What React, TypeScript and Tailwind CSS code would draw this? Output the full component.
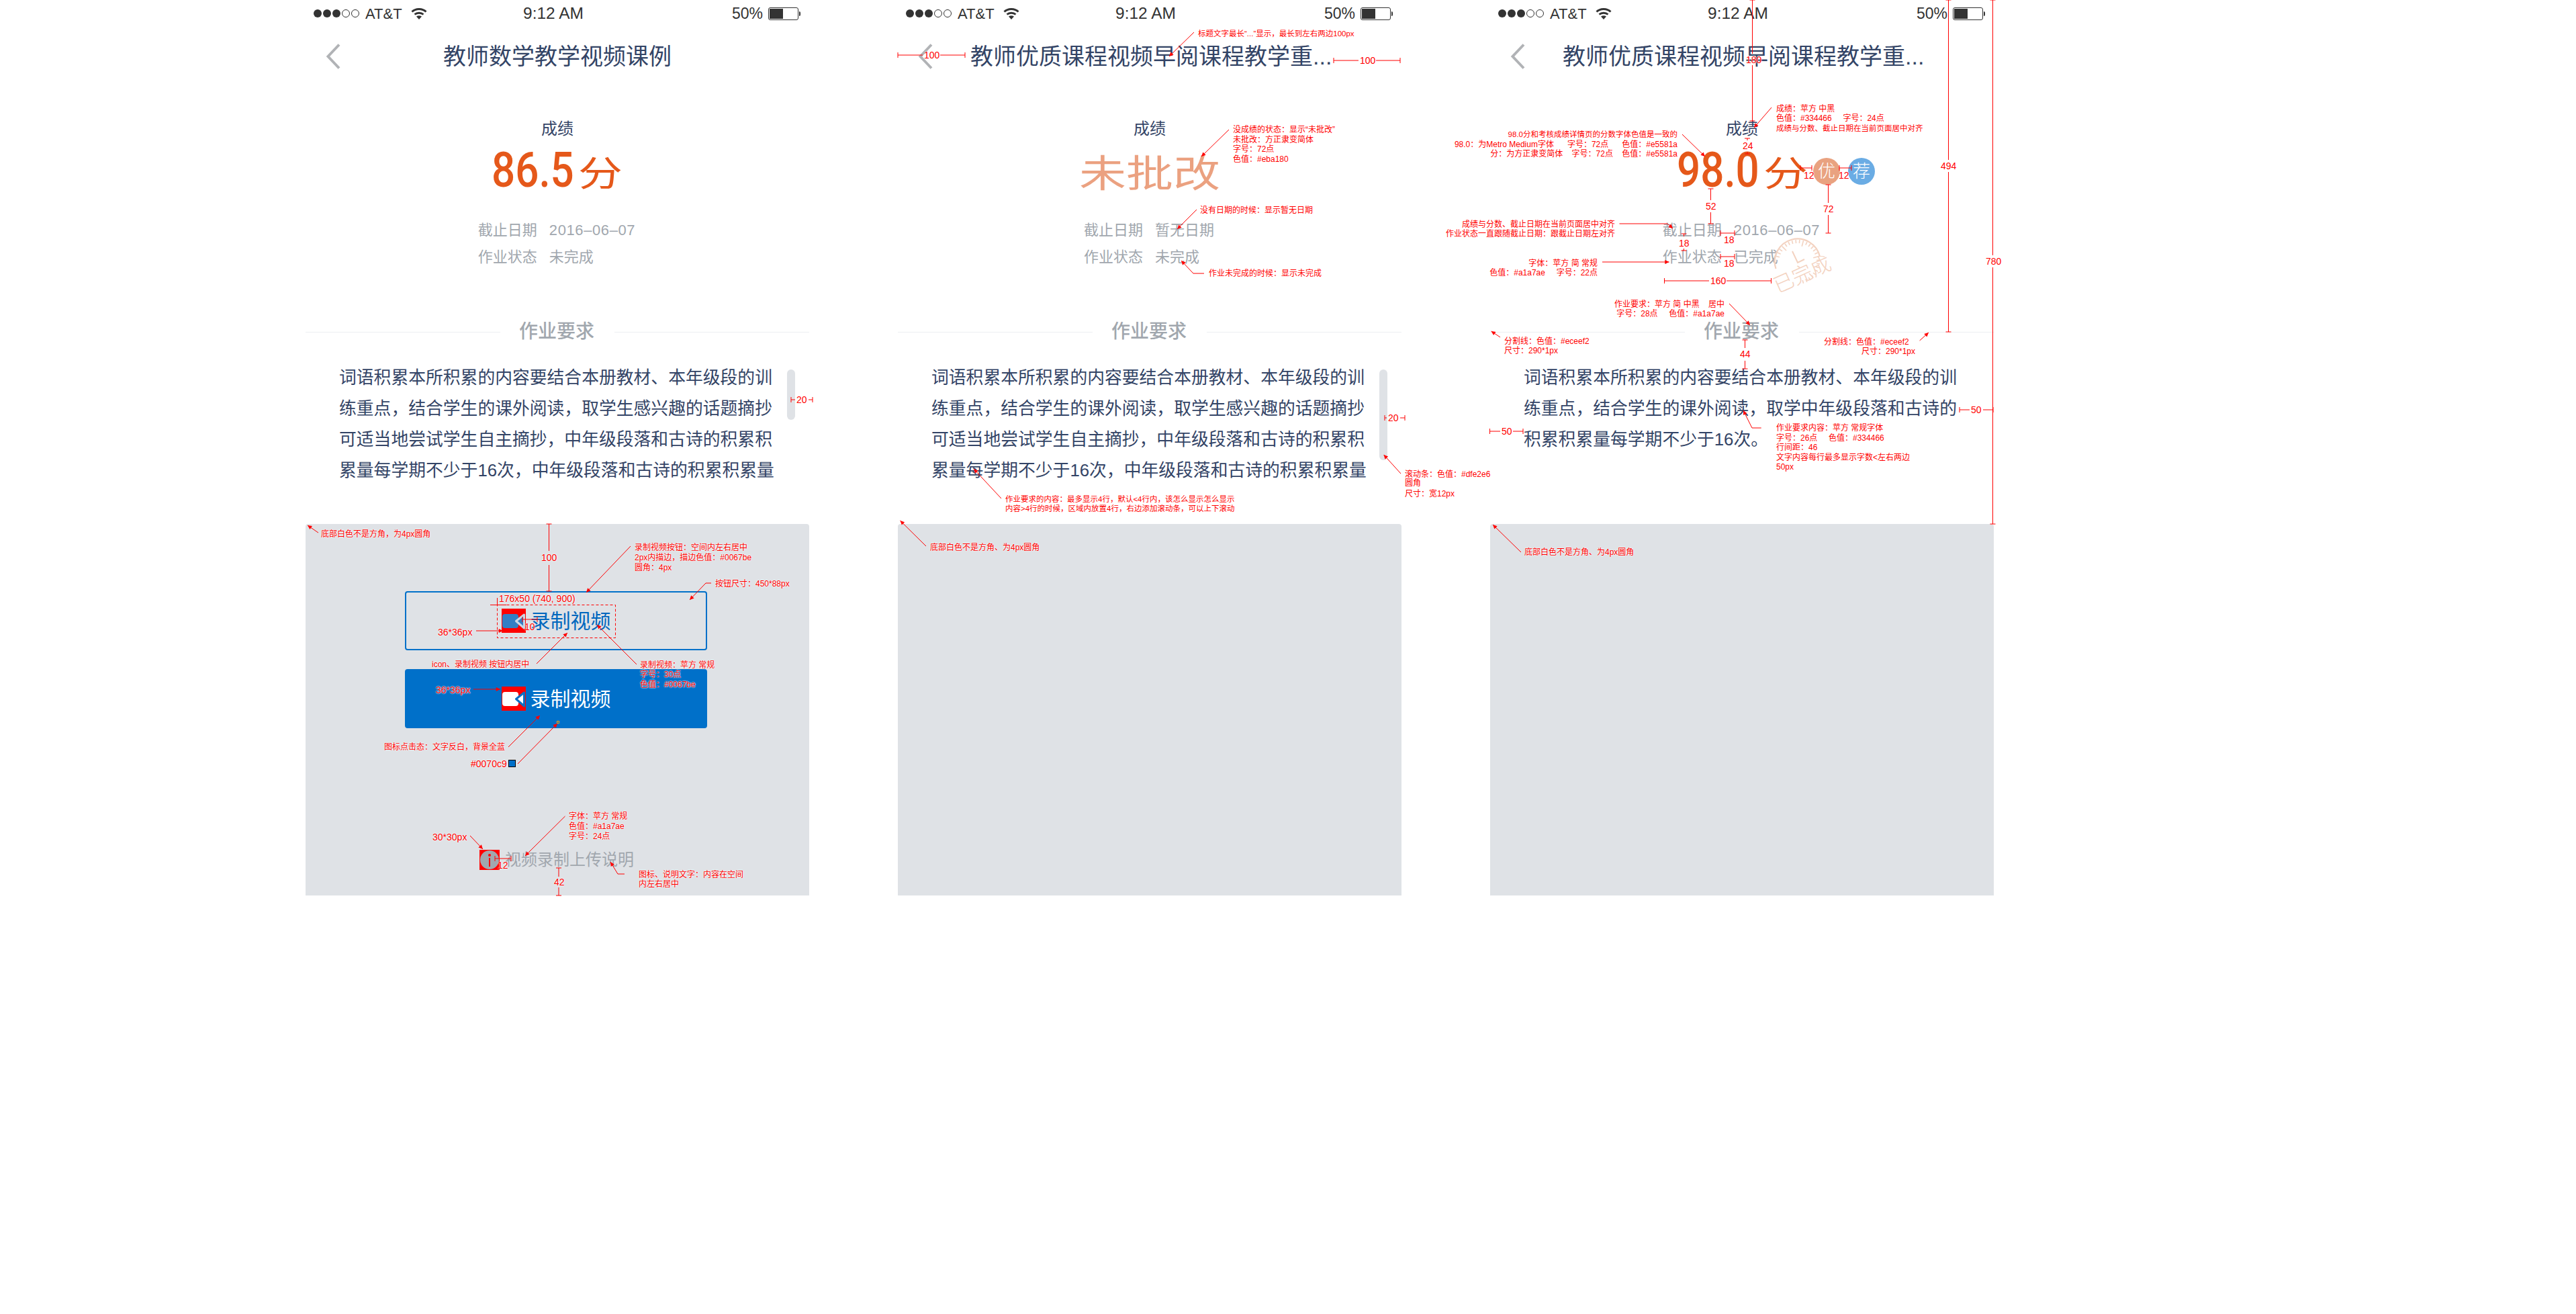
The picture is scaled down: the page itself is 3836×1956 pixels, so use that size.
import React from "react";

type Pts = number[];

// CJK strings in the picture use full-width comma and colon
const fw = (s: string) =>
  /[\u4e00-\u9fff]/.test(s) ? s.replace(/,/g, "\uFF0C").replace(/:/g, "\uFF1A") : s;

const arrows: Pts[] = [
  [474, 793, 458, 782],
  [939, 813, 873, 882],
  [1059, 868, 1051, 868, 1027, 893],
  [799, 988, 845, 942],
  [948, 989, 889, 930],
  [757, 1112, 804, 1065],
  [771, 1137, 830, 1077],
  [709, 939, 749, 939],
  [705, 1026, 745, 1026],
  [700, 1244, 719, 1264],
  [841.5, 1215, 782, 1274],
  [930, 1301, 920, 1301, 909, 1283],
  [1778, 48, 1741, 84],
  [1830, 193, 1789, 233],
  [1782, 312, 1753, 341],
  [1793, 407, 1777, 407, 1759, 388],
  [2086, 705, 2060.6, 677],
  [1491, 742, 1450, 698],
  [1379, 813, 1340.5, 775],
  [2638, 160, 2612, 190],
  [2505, 200, 2539, 233],
  [2411.5, 333, 2483, 333, 2491, 340],
  [2386, 390, 2485.6, 390],
  [2575, 452, 2606, 484],
  [2234, 502, 2220.6, 493],
  [2858.6, 507, 2872, 495],
  [2622.7, 637, 2609, 637, 2596, 611],
  [2265, 822, 2223, 781],
];

const dims: Pts[] = [
  [817.5, 780, 817.5, 880, 820, 841],
  [778, 922, 800, 922],
  [737, 1278, 761, 1278],
  [832, 1292, 832, 1333, 1305, 1321],
  [1178, 595, 1210, 595, 1184, 1204],
  [1337, 82, 1437, 82, 1374, 1400],
  [1986, 90, 2085, 90, 2023, 2049],
  [2062, 622, 2092, 622, 2065, 2085],
  [2609.5, 0, 2609.5, 180, 80, 97],
  [2901.5, 0, 2901.5, 494, 238, 256],
  [2967.5, 0, 2967.5, 780, 380, 398],
  [2602, 206, 2602, 229, 209, 226],
  [2547.5, 281, 2547.5, 333, 298, 316],
  [2722.5, 275, 2722.5, 347, 302, 320],
  [2507.5, 348, 2507.5, 373, 352, 370],
  [2681, 250, 2698, 250],
  [2739, 250, 2757, 250],
  [2562, 347, 2583, 347],
  [2562, 382, 2583, 382],
  [2478.5, 418, 2637.5, 418, 2545, 2571],
  [2598.5, 506, 2598.5, 549, 518, 537],
  [2918, 610, 2968, 610, 2933, 2953],
  [2218.5, 642, 2268, 642, 2234, 2253],
];

type Label = [number, number, string, number?, boolean?];

const labels: Label[] = [
  [478, 795, "底部白色不是方角,为4px圆角"],
  [806, 830, "100", 14],
  [945, 815, "录制视频按钮:空间内左右居中"],
  [945, 830, "2px内描边,描边色值:#0067be"],
  [945, 845, "圆角:4px"],
  [1065, 869, "按钮尺寸:450*88px"],
  [743, 891, "176x50 (740, 900)", 14],
  [652, 941, "36*36px", 14],
  [781, 933, "10", 14],
  [643, 989, "icon、录制视频 按钮内居中"],
  [953, 990, "录制视频:苹方 常规"],
  [953, 1004, "字号:30点"],
  [953, 1019, "色值:#0067be"],
  [649, 1027, "36*36px", 14],
  [572, 1112, "图标点击态:文字反白,背景全蓝"],
  [701, 1137, "#0070c9", 14],
  [644, 1246, "30*30px", 14],
  [847, 1215, "字体:苹方 常规"],
  [847, 1230, "色值:#a1a7ae"],
  [847, 1245, "字号:24点"],
  [741, 1288, "12", 14],
  [825, 1313, "42", 14],
  [951, 1302, "图标、说明文字:内容在空间"],
  [951, 1316, "内左右居中"],
  [1186, 595, "20", 14],

  [1784, 50, "标题文字最长“...”显示,最长到左右两边100px", 11.5],
  [1376, 82, "100", 14],
  [2025, 90, "100", 14],
  [1836, 193, "没成绩的状态:显示“未批改”"],
  [1836, 208, "未批改:方正隶变简体"],
  [1836, 222, "字号:72点"],
  [1836, 237, "色值:#eba180"],
  [1787, 313, "没有日期的时候:显示暂无日期"],
  [1800, 407, "作业未完成的时候:显示未完成"],
  [2067, 622, "20", 14],
  [2092, 706, "滚动条:色值:#dfe2e6"],
  [2092, 719, "圆角"],
  [2092, 735, "尺寸:宽12px"],
  [1497, 743, "作业要求的内容:最多显示4行,默认<4行内,该怎么显示怎么显示", 11.5],
  [1497, 757, "内容>4行的时候,区域内放置4行,右边添加滚动条,可以上下滚动", 11.5],
  [1385, 815, "底部白色不是方角、为4px圆角"],

  [2600, 89, "180", 14],
  [2890, 247, "494", 14],
  [2957, 389, "780", 14],
  [2645, 162, "成绩:苹方 中黑"],
  [2645, 176, "色值:#334466     字号:24点"],
  [2645, 191, "成绩与分数、截止日期在当前页面居中对齐", 11.5],
  [2498, 200, "98.0分和考核成绩详情页的分数字体色值是一致的", 11.5, true],
  [2498, 215, "98.0:为Metro Medium字体      字号:72点      色值:#e5581a", 12, true],
  [2498, 229, "分:为方正隶变简体    字号:72点    色值:#e5581a", 12, true],
  [2595, 217, "24", 14],
  [2540, 307, "52", 14],
  [2715, 311, "72", 14],
  [2686, 261, "12", 14],
  [2738, 261, "12", 14],
  [2405, 334, "成绩与分数、截止日期在当前页面居中对齐", 12, true],
  [2405, 348, "作业状态一直跟随截止日期:跟截止日期左对齐", 12, true],
  [2500, 362, "18", 14],
  [2567, 357, "18", 14],
  [2567, 392, "18", 14],
  [2379, 392, "字体:苹方 简 常规", 12, true],
  [2379, 406, "色值:#a1a7ae     字号:22点", 12, true],
  [2547, 418, "160", 14],
  [2568, 453, "作业要求:苹方 简 中黑    居中", 12, true],
  [2568, 467, "字号:28点     色值:#a1a7ae", 12, true],
  [2240, 508, "分割线:色值:#eceef2"],
  [2240, 522, "尺寸:290*1px"],
  [2716, 509, "分割线:色值:#eceef2"],
  [2852, 523, "尺寸:290*1px", 12, true],
  [2591, 527, "44", 14],
  [2935, 610, "50", 14],
  [2236, 642, "50", 14],
  [2645, 637, "作业要求内容:苹方 常规字体"],
  [2645, 652, "字号:26点     色值:#334466"],
  [2645, 666, "行间距:46"],
  [2645, 681, "文字内容每行最多显示字数<左右两边"],
  [2645, 695, "50px"],
  [2270, 822, "底部白色不是方角、为4px圆角"],
];

function Arrow({ p }: { p: Pts }) {
  const n = p.length;
  const [x1, y1, x2, y2] = [p[n - 4], p[n - 3], p[n - 2], p[n - 1]];
  const a = Math.atan2(y2 - y1, x2 - x1);
  const s = 7;
  const w = 0.45;
  const h = [
    x2,
    y2,
    x2 - s * Math.cos(a - w),
    y2 - s * Math.sin(a - w),
    x2 - s * Math.cos(a + w),
    y2 - s * Math.sin(a + w),
  ].join(" ");
  return (
    <g>
      <polyline points={p.join(" ")} fill="none" stroke="#ff0000" strokeWidth="1" />
      <polygon points={h} fill="#ff0000" />
    </g>
  );
}

function Dim({ d }: { d: Pts }) {
  const [x1, y1, x2, y2, g1, g2] = d;
  const vertical = x1 === x2;
  const t = 4;
  const segs: Pts[] = [];
  if (g1 !== undefined && g2 !== undefined) {
    if (vertical) {
      segs.push([x1, y1, x1, g1], [x1, g2, x1, y2]);
    } else {
      segs.push([x1, y1, g1, y1], [g2, y1, x2, y1]);
    }
  } else {
    segs.push([x1, y1, x2, y2]);
  }
  return (
    <g stroke="#ff0000" strokeWidth="1">
      {segs.map((s, i) => (
        <line key={i} x1={s[0]} y1={s[1]} x2={s[2]} y2={s[3]} />
      ))}
      {vertical ? (
        <>
          <line x1={x1 - t} y1={y1} x2={x1 + t} y2={y1} />
          <line x1={x1 - t} y1={y2} x2={x1 + t} y2={y2} />
        </>
      ) : (
        <>
          <line x1={x1} y1={y1 - t} x2={x1} y2={y1 + t} />
          <line x1={x2} y1={y1 - t} x2={x2} y2={y1 + t} />
        </>
      )}
    </g>
  );
}

function AnnotationLayer() {
  return (
    <div className="absolute inset-0 pointer-events-none">
      <svg width="3836" height="1956" className="absolute left-0 top-0">
        {arrows.map((p, i) => (
          <Arrow key={i} p={p} />
        ))}
        {dims.map((d, i) => (
          <Dim key={i} d={d} />
        ))}
        <rect x="740.5" y="900.5" width="176" height="49" fill="none" stroke="#ff0000" strokeDasharray="4 3" />
        <line x1="730" y1="900.5" x2="754" y2="900.5" stroke="#ff0000" />
        <line x1="740.5" y1="890" x2="740.5" y2="900" stroke="#ff0000" />
        <rect x="829.5" y="1073.5" width="3" height="3" fill="#0070c9" stroke="#f59e0b" />
      </svg>
      {labels.map(([x, y, text, size = 12, right], i) => (
        <div
          key={i}
          className={`absolute whitespace-pre leading-[14px] text-[#ff0000] [text-shadow:0_0_2px_#fff,0_0_2px_#fff] ${
            right ? "-translate-x-full" : ""
          }`}
          style={{ left: x, top: y - 7, fontSize: size }}
        >
          {fw(text)}
        </div>
      ))}
      <div className="absolute left-[757px] top-[1131px] h-[11px] w-[11px] border border-black bg-[#0070c9]" />
    </div>
  );
}

function Wifi() {
  return (
    <svg width="24" height="18" viewBox="0 0 24 18" className="block">
      <path d="M1.5 6.5C7 1 17 1 22.5 6.5" fill="none" stroke="#333" strokeWidth="3" />
      <path d="M5.5 10.5C9 7.4 15 7.4 18.5 10.5" fill="none" stroke="#333" strokeWidth="3" />
      <path d="M8 13.5Q12 11 16 13.5L12 18Z" fill="#333" />
    </svg>
  );
}

function StatusBar() {
  return (
    <div className="flex h-[40px] items-center text-[23px] text-[#333] pr-[13px]">
      <div className="flex w-[324px] items-center pl-[12px]">
        <div className="flex gap-[2px]">
          <span className="h-[12px] w-[12px] rounded-full bg-[#333]" />
          <span className="h-[12px] w-[12px] rounded-full bg-[#333]" />
          <span className="h-[12px] w-[12px] rounded-full bg-[#333]" />
          <span className="h-[12px] w-[12px] rounded-full border border-[#333]" />
          <span className="h-[12px] w-[12px] rounded-full border border-[#333]" />
        </div>
        <span className="ml-[9px] text-[22px]">AT&amp;T</span>
        <span className="ml-[13px]">
          <Wifi />
        </span>
      </div>
      <span className="text-[24.5px]">9:12 AM</span>
      <div className="ml-auto flex items-center">
        <span>50%</span>
        <div className="ml-[8px] h-[19px] w-[45px] rounded-[3px] border border-[#333] p-[1px]">
          <div className="h-full w-[20px] bg-[#333]" />
        </div>
        <div className="ml-[1px] h-[7px] w-[2px] rounded-r-[2px] bg-[#333]" />
      </div>
    </div>
  );
}

function Nav({ title }: { title: string }) {
  return (
    <div className="grid h-[88px] grid-cols-[108px_1fr_108px] items-center">
      <div className="pl-[30px]">
        <svg width="22" height="38" viewBox="0 0 22 38" className="block">
          <path d="M20 1.5L3.5 19L20 36.5" fill="none" stroke="#b1b3b6" strokeWidth="4" />
        </svg>
      </div>
      <div className="whitespace-nowrap text-center text-[34px] leading-[44px] text-[#334466]">{title}</div>
      <div />
    </div>
  );
}

function DateBlock({ date, status, numeric }: { date: string; status: string; numeric?: boolean }) {
  return (
    <div className="mx-auto mt-[52px] grid w-fit -translate-x-[1px] grid-cols-[auto_auto] gap-x-[18px] gap-y-[18px] text-[22px] leading-[22px] text-[#a1a7ae]">
      <span>截止日期</span>
      <span className={numeric ? "tracking-[0.6px]" : ""}>{date}</span>
      <span>作业状态</span>
      <span>{status}</span>
    </div>
  );
}

function Digits({ value }: { value: string }) {
  return (
    <span className="inline-block w-[121px] origin-left scale-x-[0.86] whitespace-nowrap font-['Roboto',sans-serif] text-[72px] font-medium leading-[52px] text-[#e5581a]">
      {value}
    </span>
  );
}

function HandChar({ text, color, w }: { text: string; color: string; w: string }) {
  return (
    <span
      className={`inline-block scale-y-[0.8] whitespace-nowrap font-['Noto_Sans_CJK_SC',sans-serif] font-normal leading-[52px] ${w}`}
      style={{ color }}
    >
      {text}
    </span>
  );
}

function Section({ lines, bar }: { lines: string[]; bar?: string }) {
  return (
    <>
      <div className="mt-[86px] flex h-[28px] items-center justify-between">
        <div className="h-px w-[290px] bg-[#eceef2]" />
        <div className="-translate-x-[1px] text-[28px] font-medium leading-[28px] text-[#a1a7ae]">作业要求</div>
        <div className="h-px w-[290px] bg-[#eceef2]" />
      </div>
      <div className="mt-[31px] flex pl-[50px]">
        <div className="w-[650px] shrink-0 text-[25.8px] leading-[46px] text-[#334466]">
          {lines.map((l) => (
            <div key={l} className="whitespace-nowrap">
              {fw(l)}
            </div>
          ))}
        </div>
        {bar && <div className={`ml-[17px] mt-[11px] w-[12px] rounded-full bg-[#dfe2e6] ${bar}`} />}
      </div>
    </>
  );
}

function Phone({ children, gray }: { children: React.ReactNode; gray?: React.ReactNode }) {
  return (
    <div className="relative w-[750px] shrink-0">
      <div className="h-[780px]">{children}</div>
      <div className="h-[553px] rounded-t-[4px] bg-[#dfe2e6]">{gray}</div>
    </div>
  );
}

function RecordIcon({ body, ring, tri }: { body: string; ring: string; tri: string }) {
  return (
    <svg width="36" height="36" viewBox="0 0 36 36" className="block shrink-0">
      <rect width="36" height="36" fill="#ff0000" />
      <rect x="1" y="8" width="24" height="21" rx="4" fill={body} />
      <path d="M33.5 9L21.5 18.5L33.5 29Z" fill={tri} stroke={ring} strokeWidth="3" strokeLinejoin="round" />
    </svg>
  );
}

function RecordButton({ filled }: { filled?: boolean }) {
  return (
    <div
      className={`ml-[148px] flex h-[88px] w-[450px] items-center justify-center gap-[7px] rounded-[4px] border-2 border-[#0070c9] text-[30px] ${
        filled ? "bg-[#0070c9] text-white" : "text-[#0067be]"
      }`}
    >
      {filled ? (
        <RecordIcon body="#ffffff" ring="#0b6fc4" tri="#ffffff" />
      ) : (
        <RecordIcon body="#337fc4" ring="#c9d7e6" tri="#337fc4" />
      )}
      <span>录制视频</span>
    </div>
  );
}

function InfoRow() {
  return (
    <div className="mt-[181px] flex -translate-x-[1px] items-center justify-center gap-[8px] text-[24px] leading-[30px] text-[#a1a7ae]">
      <svg width="30" height="30" viewBox="0 0 30 30" className="block shrink-0">
        <rect width="30" height="30" fill="#ff0000" />
        <circle cx="15" cy="15" r="14" fill="#a1a7ae" />
        <circle cx="15" cy="8" r="2" fill="#ff0000" />
        <rect x="14" y="12" width="2" height="13" fill="#ff0000" />
      </svg>
      <span>视频录制上传说明</span>
    </div>
  );
}

function Stamp() {
  const ticks = [];
  for (let i = 0; i <= 24; i++) {
    const a = ((-165 + i * 10) * Math.PI) / 180;
    const long = i % 6 === 3;
    const r1 = 33;
    const r2 = long ? 24 : 28;
    ticks.push(
      <line
        key={i}
        x1={38 + r1 * Math.cos(a)}
        y1={38 + r1 * Math.sin(a)}
        x2={38 + r2 * Math.cos(a)}
        y2={38 + r2 * Math.sin(a)}
      />
    );
  }
  return (
    <div className="absolute left-[420px] top-[352px] h-[80px] w-[100px]">
      <svg width="100" height="80" viewBox="0 0 100 80" className="block">
        <g stroke="#f3d2c0" fill="none" strokeWidth="1.6">
          <path d="M5.5 48A34 34 0 1 1 71 30" strokeWidth="2.2" />
          {ticks}
          <path d="M30 22L38 39L48 34" strokeWidth="2" />
        </g>
      </svg>
      <div className="absolute left-[0px] top-[42px] -rotate-[24deg] whitespace-nowrap text-[30px] font-light leading-[30px] text-[#f3d2c0]">
        已完成
      </div>
    </div>
  );
}

const longTitle = "教师优质课程视频早阅课程教学重...";
const l1 = "词语积累本所积累的内容要结合本册教材、本年级段的训";
const l2 = "练重点,结合学生的课外阅读,取学生感兴趣的话题摘抄";
const l3 = "可适当地尝试学生自主摘抄,中年级段落和古诗的积累积";
const l4 = "累量每学期不少于16次,中年级段落和古诗的积累积累量";

export default function App() {
  return (
    <div className="relative h-[1956px] w-[3836px] overflow-hidden bg-white font-['Liberation_Sans','Noto_Sans_CJK_SC',sans-serif]">
      <div className="flex gap-[132px] pl-[455px]">
        <Phone
          gray={
            <div className="pt-[100px]">
              <RecordButton />
              <div className="h-[28px]" />
              <RecordButton filled />
              <InfoRow />
            </div>
          }
        >
          <StatusBar />
          <Nav title="教师数学教学视频课例" />
          <div className="mt-[52px] text-center text-[24px] leading-[24px] text-[#334466]">成绩</div>
          <div className="mt-[24px] flex h-[52px] -translate-x-[2px] justify-center gap-[8px]">
            <Digits value="86.5" />
            <HandChar text="分" color="#e5581a" w="w-[63px] text-[66px]" />
          </div>
          <DateBlock date="2016–06–07" status="未完成" numeric />
          <Section lines={[l1, l2, l3, l4]} bar="h-[75px]" />
        </Phone>

        <Phone>
          <StatusBar />
          <Nav title={longTitle} />
          <div className="mt-[52px] text-center text-[24px] leading-[24px] text-[#334466]">成绩</div>
          <div className="mt-[24px] flex h-[52px] justify-center">
            <HandChar text="未批改" color="#eba180" w="text-[70px]" />
          </div>
          <DateBlock date="暂无日期" status="未完成" />
          <Section lines={[l1, l2, l3, l4]} bar="h-[135px]" />
        </Phone>

        <Phone>
          <StatusBar />
          <Nav title={longTitle} />
          <div className="mt-[52px] text-center text-[24px] leading-[24px] text-[#334466]">成绩</div>
          <div className="relative mx-auto mt-[24px] flex h-[52px] w-fit -translate-x-[1px] gap-[8px]">
            <Digits value="98.0" />
            <HandChar text="分" color="#e5581a" w="w-[63px] text-[66px]" />
            <div className="absolute left-full top-[7px] ml-[11px] flex gap-[12px]">
              <span className="flex h-[40px] w-[40px] items-center justify-center rounded-full bg-[#e9a280] text-[26px] font-light text-white">
                优
              </span>
              <span className="flex h-[40px] w-[40px] items-center justify-center rounded-full bg-[#6aace4] text-[26px] font-light text-white">
                荐
              </span>
            </div>
          </div>
          <DateBlock date="2016–06–07" status="已完成" numeric />
          <Stamp />
          <Section lines={[l1, "练重点,结合学生的课外阅读,取学中年级段落和古诗的", "积累积累量每学期不少于16次。"]} />
        </Phone>
      </div>
      <AnnotationLayer />
    </div>
  );
}
